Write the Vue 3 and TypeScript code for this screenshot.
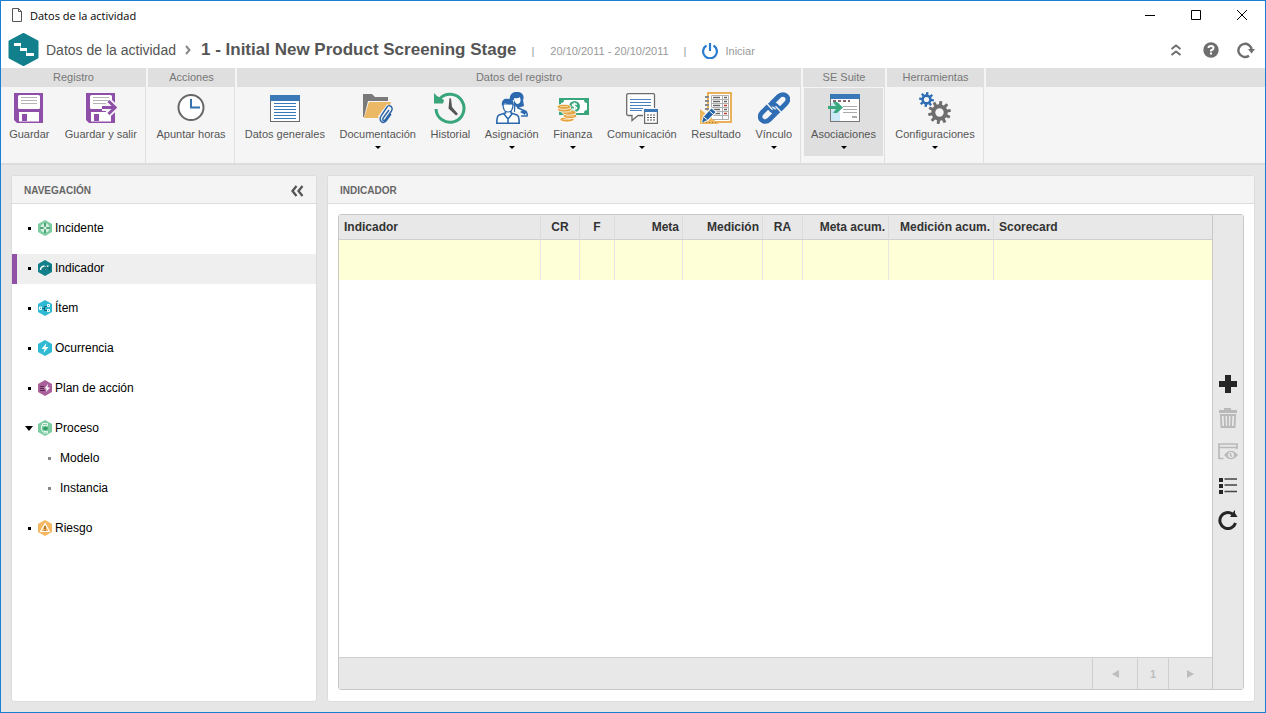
<script setup lang="ts">
interface RibbonItem {
  label: string
  icon: string
  menu?: boolean
  active?: boolean
}
interface RibbonGroup {
  id: string
  title: string
  items: RibbonItem[]
}
interface NavItem {
  label: string
  icon: string
  active?: boolean
  children?: string[]
}

function gear(cx: number, cy: number, outer: number, inner: number, hole: number, teeth: number): string {
  const step = (Math.PI * 2) / teeth
  const pts: string[] = []
  const at = (r: number, a: number) => `${(cx + r * Math.cos(a)).toFixed(2)} ${(cy + r * Math.sin(a)).toFixed(2)}`
  for (let i = 0; i < teeth; i++) {
    const a = i * step - Math.PI / 2 + 0.12
    pts.push(at(inner, a - step * 0.3), at(outer, a - step * 0.2), at(outer, a + step * 0.2), at(inner, a + step * 0.3))
  }
  return `M${pts.join('L')}Z M${cx - hole} ${cy}a${hole} ${hole} 0 1 0 ${hole * 2} 0a${hole} ${hole} 0 1 0 ${-hole * 2} 0Z`
}

const floppy =
  '<path fill="#8e4fa8" d="M1 1H30V31H4L1 28Z"/><rect x="5" y="3" width="22" height="14" rx="1.500" fill="#fff"/>' +
  '<path stroke="#b5b5b5" d="M8 5.500H24M8 8.500H24M8 11.500H24"/><rect x="6" y="20" width="20" height="9.500" fill="#fff"/><rect x="9" y="22" width="5" height="7" fill="#8e4fa8"/>'

const icons: Record<string, string> = {
  save: floppy,
  saveExit:
    floppy +
    '<path fill="none" stroke="#f5f5f5" stroke-width="7" d="M17 15.500H29M23 9L30 15.500L23 22"/>' +
    '<path fill="none" stroke="#8e4fa8" stroke-width="3" d="M17 15.500H30M23.500 9L30.200 15.500L23.500 22"/>',
  clock:
    '<circle cx="16" cy="15.500" r="12.500" fill="#fff" stroke="#666" stroke-width="2"/>' +
    '<path fill="none" stroke="#3572b0" stroke-width="2" d="M16 7V15.500H25"/>',
  form:
    '<rect x="1.500" y="3.500" width="29" height="26" fill="#fff" stroke="#6b6b6b"/><path fill="#3b78b8" d="M1 3H31V9H1Z"/>' +
    '<path stroke="#3b78b8" d="M5 11.500H27M5 14.500H27M5 17.500H27M5 20.500H27M5 23.500H27M5 26.500H27"/>',
  folder:
    '<path fill="#7a7a7a" d="M1 2H10L13 5H26V9H6L2 25H1Z"/><path fill="#ebb865" d="M7 10H29L24 26H2Z"/>' +
    '<path fill="none" stroke="#f5f5f5" stroke-width="4" d="M27 17L20.500 25.500L23 28L30 19L25.500 15L18.500 24.500L24 29"/>' +
    '<path fill="none" stroke="#2a63a6" stroke-width="1.400" d="M27 18L21.500 25.500C19.500 28.500 22 29.500 23.500 27.500L29.500 19C31.500 15.500 27.500 11.500 25 15L19 24C16.500 28.500 20.500 32.500 24 29L29 22"/>',
  history:
    '<path fill="none" stroke="#38a67a" stroke-width="3" d="M5.500 7A14 14 0 1 1 2 17"/><path fill="#38a67a" d="M0 1L3 4L10 8L9 11.500H0Z"/>' +
    '<path fill="#555" d="M15.500 6L17 6.500L18 15L24 22L22 23.500L14.500 16.500Z"/>',
  people:
    '<path fill="#fff" stroke="#2c69ae" stroke-width="1.500" d="M19 10C20 13 22 15 22 16L29 19Q32 21 31 24H18Z"/>' +
    '<path fill="#2c69ae" d="M14 9C13 3 16 0 20 0C26-1 29 4 27 8L28 14L22 16L18 12Z"/><path fill="#fff" d="M18 6Q22 7 24 5Q26 12 21 12Q18 10 18 6Z"/>' +
    '<path fill="#f5f5f5" d="M5 8H18V20H25V32H0V20H5Z"/><path fill="#fff" stroke="#2c69ae" stroke-width="1.600" d="M9.500 18.500V21L3 23Q.8 24 .8 31.200H23.200Q23.200 24 21 23L15 21V18.500M8 22L12 27L16 22M12 27V31"/>' +
    '<path fill="#fff" stroke="#2c69ae" stroke-width="1.200" d="M7 12Q7 20 12 20Q17 20 17 12Z"/><path fill="#2c69ae" d="M6 14C5 9 8 6 12 7C17 6 18 10 17.500 14L16 12Q12 13 9 11Z"/><path fill="#2c69ae" d="M27 18L24 20L29 23L31 19Z"/>',
  money:
    '<path fill="#38a67a" d="M2 6H32V23H2Z"/><path fill="#fff" d="M7 8H27Q27 11 30 11V18Q27 18 27 21H7Q7 18 4 18V11Q7 11 7 8Z"/>' +
    '<circle cx="17.500" cy="14.500" r="5.500" fill="#38a67a"/><path fill="none" stroke="#fff" stroke-width="1.300" d="M20 12.500Q17.500 11 15.500 12.500Q15 14 17.500 14.500Q20 15 19.500 16.500Q17.500 18 15 16.500M17.500 10.500V18.500"/>' +
    '<g fill="#e3a33f" stroke="#fff" stroke-width=".8"><ellipse cx="10" cy="27.500" rx="7" ry="2.600"/><ellipse cx="13" cy="24" rx="7" ry="2.600"/><ellipse cx="12" cy="20.500" rx="7" ry="2.600"/><ellipse cx="7.500" cy="17.500" rx="7" ry="2.600"/><ellipse cx="7" cy="14.800" rx="7" ry="2.600"/></g>' +
    '<path stroke="#f4cf94" d="M3 14.500H11M8 20H15M9 24H17M6 27.500H14"/>',
  chat:
    '<path fill="#fff" stroke="#6b6b6b" stroke-width="1.300" d="M2.500 1.700H27.500Q28.500 1.700 28.500 2.700V23.500H12L6 28.500V23.500H2.500Q.7 23.500 .7 22V3Q.7 1.700 2.500 1.700Z"/>' +
    '<path stroke="#4c83bf" d="M4 7.500H25M4 10.500H25M4 13.500H25M4 16.500H25M4 18.500H16"/><path fill="#f5f5f5" d="M17 16H32V32H17Z"/>' +
    '<rect x="18.600" y="17.600" width="12.800" height="13.800" fill="#fff" stroke="#6b6b6b" stroke-width="1.200"/><path fill="#3b78b8" d="M18 17H32V20H18Z"/>' +
    '<path stroke="#555" stroke-width="1.200" stroke-dasharray="2 1" d="M21 23H29M21 25.500H29M21 28H29"/>',
  result:
    '<path fill="#fff" stroke="#e9b15a" stroke-width="2" d="M8 1H31V30H8Z"/><path fill="#fff" stroke="#b0b0b0" d="M11.500 3.500H28.500V27.500H11.500Z"/>' +
    '<path stroke="#b0b0b0" d="M11 7.500H28M11 11.500H28M11 15.500H28M11 19.500H28M11 23.500H28M22.500 4V27"/>' +
    '<path stroke="#666" stroke-width="1.300" d="M13 5.500H20M13 9.500H20M13 13.500H20M13 17.500H20M13 21.500H20M24 5.500H27M24 9.500H27M24 17.500H27"/><path stroke="#c0392b" stroke-width="1.500" d="M24 13.500H27M24 21.500H27"/>' +
    '<path stroke="#888" stroke-width="4" stroke-dasharray="2 2" d="M7 4V18"/><path fill="#edb65d" d="M0 17V32H19Z"/><path stroke="#9a783f" stroke-dasharray="1 2" d="M3 30.500H16"/>' +
    '<path fill="#fff" d="M1 31L3 24L11 15L17 20L8 29Z"/><path fill="#2563a8" d="M2 30.500L3.500 25L11.500 16.500L15.500 20L7.500 28Z"/><path stroke="#fff" d="M4 25L7.500 28M9.500 19L13 22"/>',
  link:
    '<g fill="none" stroke="#2f6db4" stroke-width="4.600"><path d="M13 12L20.500 4.500C26-1 33.500 6 28 11.500L21.500 18C18.500 21 15 20 13 17.500L10.500 14.500"/>' +
    '<path d="M19 20L11.500 27.500C6 33-1.500 26 4 20.500L10.500 14C13.500 11 17 12 19 14.500L21.500 17.500"/></g>' +
    '<path stroke="#f5f5f5" stroke-width="1.300" d="M8.800 11.500L14.500 17.800M17.500 14.200L23.500 20.500"/>',
  assoc:
    '<rect x="2.500" y="3.500" width="29" height="26" fill="#fff" stroke="#777"/><path fill="#3b78b8" d="M2 2H32V7H2Z"/><path fill="#cfe8f8" d="M3 11H12V29H3Z"/>' +
    '<path stroke="#8a6570" stroke-width="2" stroke-dasharray="3 2" d="M5 9H22"/><path stroke="#aaa" d="M15 14.500H29M15 17.500H29M15 20.500H29"/><path stroke="#aaa" stroke-width="2" d="M24 25H29"/>' +
    '<path fill="#3aaa7e" d="M0 14H8L5 10H9L15 15.500L9 21H5L8 17H0Z"/>',
  gears:
    `<path fill="#2f6db4" fill-rule="evenodd" d="${gear(7.5, 7.5, 7.5, 5.2, 2.6, 8)}"/>` +
    `<path fill="#6e6e6e" fill-rule="evenodd" d="${gear(20.5, 20.5, 11.5, 8.2, 4.2, 10)}"/>`,
}

const hex = (fill: string) => `<path fill="${fill}" d="M7 0L14 4V12L7 16L0 12V4Z"/>`
const navIcons: Record<string, string> = {
  incident:
    hex('#7ccba1') +
    '<circle cx="7" cy="8" r="4.700" fill="#d5efe0"/><path stroke="#2f8f5d" stroke-width="1.600" d="M7 3V13M2 8H12"/><circle cx="7" cy="8" r="1.500" fill="#d5efe0"/>',
  gauge:
    hex('#12808a') +
    '<path fill="none" stroke="#fff" stroke-width="1.500" d="M2.500 10Q2.500 6.500 6.500 6M7 10Q7 6.500 10.500 6"/><path fill="none" stroke="#0c5c64" stroke-width="1.500" d="M6 10L9 6.500M11.500 6.500V10"/>',
  item:
    hex('#2fb9d2') +
    '<path fill="none" stroke="#fff" d="M1.500 7H3.500V9.500H1.500ZM9.500 4.500H11.500V6.500H9.500ZM9.500 9.500H11.500V11.500H9.500Z"/><path fill="none" stroke="#17616f" d="M4 8.500H7M9 6.500H6.500V10.500H9"/>',
  bolt: hex('#2fb9d2') + '<path fill="#fff" d="M8.500 3L3.500 9H6.500L5.500 13L10.500 7H7.500Z"/>',
  plan:
    hex('#a9609b') + '<path stroke="#57294f" d="M2 6.500H6M2 8.500H6M2 10.500H7"/><path fill="#fff" d="M10 4L6.500 8.500H8.500L8 12L12 7.500H9.500Z"/>',
  process:
    hex('#7ccba1') +
    '<path fill="none" stroke="#e8f7ee" d="M4.500 3.500H9.500V5.500H4.500ZM3.500 5V10L5.500 12.500M5.500 11.500H9.500V13H5.500"/><path fill="#2f9a63" d="M4.500 8.500L7.500 6.500L10.500 8.500L7.500 10.500Z"/>',
  risk:
    hex('#f5b860') +
    '<path fill="none" stroke="#fff" stroke-width="1.200" stroke-linejoin="round" d="M7 3.500L11.500 11.500H2.500Z"/><path stroke="#8c5a1c" stroke-width="1.300" d="M7 6V9M7 9.700V11"/>',
}

const groups: RibbonGroup[] = [
  { id: 'record', title: 'Registro', items: [{ label: 'Guardar', icon: 'save' }, { label: 'Guardar y salir', icon: 'saveExit' }] },
  { id: 'actions', title: 'Acciones', items: [{ label: 'Apuntar horas', icon: 'clock' }] },
  {
    id: 'data',
    title: 'Datos del registro',
    items: [
      { label: 'Datos generales', icon: 'form' },
      { label: 'Documentación', icon: 'folder', menu: true },
      { label: 'Historial', icon: 'history' },
      { label: 'Asignación', icon: 'people', menu: true },
      { label: 'Finanza', icon: 'money', menu: true },
      { label: 'Comunicación', icon: 'chat', menu: true },
      { label: 'Resultado', icon: 'result' },
      { label: 'Vínculo', icon: 'link', menu: true },
    ],
  },
  { id: 'suite', title: 'SE Suite', items: [{ label: 'Asociaciones', icon: 'assoc', menu: true, active: true }] },
  { id: 'utilities', title: 'Herramientas', items: [{ label: 'Configuraciones', icon: 'gears', menu: true }] },
]

const nav: NavItem[] = [
  { label: 'Incidente', icon: 'incident' },
  { label: 'Indicador', icon: 'gauge', active: true },
  { label: 'Ítem', icon: 'item' },
  { label: 'Ocurrencia', icon: 'bolt' },
  { label: 'Plan de acción', icon: 'plan' },
  { label: 'Proceso', icon: 'process', children: ['Modelo', 'Instancia'] },
  { label: 'Riesgo', icon: 'risk' },
]

const columns = [
  { key: 'name', label: 'Indicador', align: 'left' },
  { key: 'cr', label: 'CR', align: 'center' },
  { key: 'f', label: 'F', align: 'center' },
  { key: 'meta', label: 'Meta', align: 'right' },
  { key: 'med', label: 'Medición', align: 'right' },
  { key: 'ra', label: 'RA', align: 'center' },
  { key: 'meta-ac', label: 'Meta acum.', align: 'right' },
  { key: 'med-ac', label: 'Medición acum.', align: 'right' },
  { key: 'score', label: 'Scorecard', align: 'left' },
]
</script>

<template>
  <div class="window">
    <div class="titlebar">
      <svg class="doc" width="12" height="16" viewBox="0 0 12 16"><path fill="#fff" stroke="#555" d="M1.500 1.500H7.500L10.500 4.500V14.500H1.500ZM7.500 1.500V4.500H10.500" /></svg>
      <span class="caption">Datos de la actividad</span>
      <button type="button" aria-label="Minimizar"><svg width="12" height="12" viewBox="0 0 12 12"><path stroke="#000" d="M1 6.500H11" /></svg></button>
      <button type="button" aria-label="Maximizar"><svg width="12" height="12" viewBox="0 0 12 12"><path fill="none" stroke="#000" d="M1.500 1.500H10.500V10.500H1.500Z" /></svg></button>
      <button type="button" aria-label="Cerrar"><svg width="12" height="12" viewBox="0 0 12 12"><path stroke="#000" d="M1 1L11 11M11 1L1 11" /></svg></button>
    </div>

    <header class="header">
      <svg class="logo" width="31" height="33" viewBox="0 0 31 33">
        <path fill="#12808c" stroke="#12808c" stroke-width="2" stroke-linejoin="round" d="M15.500 1L29.500 8.500V24.500L15.500 32L1.500 24.500V8.500Z" />
        <path fill="none" stroke="#9fd0d4" d="M12.500 12V16.500M18.500 17V21.500" />
        <path stroke="#fff" stroke-width="3" d="M6 11.500H13M12 16.500H19M18 21.500H26" />
      </svg>
      <a class="crumb" href="#">Datos de la actividad</a>
      <svg class="sep" width="6" height="10" viewBox="0 0 6 10"><path fill="none" stroke="#888" stroke-width="2" d="M1 1L4.500 5L1 9" /></svg>
      <h1>1 - Initial New Product Screening Stage</h1>
      <span class="meta bar">|</span>
      <span class="meta">20/10/2011 - 20/10/2011</span>
      <span class="meta bar">|</span>
      <button type="button" class="start meta">
        <svg width="16" height="16" viewBox="0 0 16 16"><path fill="none" stroke="#2b7cd0" stroke-width="2.200" d="M4.500 2.500A6.900 6.900 0 1 0 11.500 2.500M8 0V8" /></svg>
        Iniciar
      </button>
      <div class="tools">
        <button type="button" aria-label="Contraer"><svg width="18" height="18" viewBox="0 0 18 18"><path fill="none" stroke="#6e6e6e" stroke-width="2" d="M4.500 8L9 4.500L13.500 8M4.500 14L9 10.500L13.500 14" /></svg></button>
        <button type="button" aria-label="Ayuda"><svg width="18" height="18" viewBox="0 0 18 18"><circle cx="9" cy="9" r="7.700" fill="#6e6e6e" /><path fill="none" stroke="#fff" stroke-width="2" d="M6.500 7Q6.500 5 9 5Q11.500 5 11.500 7Q11.500 8.500 9 9.500V10.500M9 11.500V13.500" /></svg></button>
        <button type="button" aria-label="Actualizar"><svg width="18" height="18" viewBox="0 0 18 18"><path fill="none" stroke="#6e6e6e" stroke-width="2.400" d="M12 14.700A6.600 6.600 0 1 1 14.600 9" /><path fill="#6e6e6e" d="M11 8H18L14.500 12.500Z" /></svg></button>
      </div>
    </header>

    <div class="ribbon">
      <section v-for="g in groups" :key="g.id" class="group" :class="g.id">
        <h2>{{ g.title }}</h2>
        <div class="actions">
          <button v-for="it in g.items" :key="it.label" type="button" :class="{ active: it.active }">
            <svg width="32" height="32" viewBox="0 0 32 32" v-html="icons[it.icon]"></svg>
            <span>{{ it.label }}</span>
            <svg v-if="it.menu" class="arrow" width="6" height="3" viewBox="0 0 6 3"><path d="M0 0H6L3 3Z" /></svg>
          </button>
        </div>
      </section>
      <div class="filler"></div>
    </div>

    <div class="content">
      <aside class="panel">
        <div class="panel-head">
          <h3>NAVEGACIÓN</h3>
          <button type="button" aria-label="Ocultar navegación"><svg width="14" height="12" viewBox="0 0 14 12"><path fill="none" stroke="#555" stroke-width="2.300" d="M6.500 1L2.500 6L6.500 11M12.500 1L8.500 6L12.500 11" /></svg></button>
        </div>
        <ul class="nav">
          <li v-for="n in nav" :key="n.label">
            <a href="#" :class="{ active: n.active }">
              <span class="marker"><svg v-if="n.children" width="8" height="5" viewBox="0 0 8 5"><path d="M0 0H8L4 5Z" /></svg><i v-else></i></span>
              <svg width="14" height="16" viewBox="0 0 14 16" v-html="navIcons[n.icon]"></svg>
              <span>{{ n.label }}</span>
            </a>
            <ul v-if="n.children">
              <li v-for="c in n.children" :key="c"><a href="#" class="sub"><i></i><span>{{ c }}</span></a></li>
            </ul>
          </li>
        </ul>
      </aside>

      <main class="panel">
        <div class="panel-head"><h3>INDICADOR</h3></div>
        <div class="frame">
          <div class="grid">
            <table>
              <colgroup><col v-for="c in columns" :key="c.key" :class="'c-' + c.key" /></colgroup>
              <thead><tr><th v-for="c in columns" :key="c.key" scope="col" :class="c.align">{{ c.label }}</th></tr></thead>
              <tbody><tr><td v-for="c in columns" :key="c.key"></td></tr></tbody>
            </table>
            <div class="pager">
              <button type="button" class="prev" aria-label="Anterior" disabled><svg width="7" height="8" viewBox="0 0 7 8"><path fill="#bdbdbd" d="M7 0V8L0 4Z" /></svg></button>
              <button type="button" class="page" disabled>1</button>
              <button type="button" class="next" aria-label="Siguiente" disabled><svg width="7" height="8" viewBox="0 0 7 8"><path fill="#bdbdbd" d="M0 0V8L7 4Z" /></svg></button>
            </div>
          </div>
          <div class="side">
            <button type="button" aria-label="Agregar"><svg width="20" height="20" viewBox="0 0 20 20"><path fill="#262626" d="M7 1H13V7H19V13H13V19H7V13H1V7H7Z" /></svg></button>
            <button type="button" aria-label="Eliminar" disabled><svg width="20" height="20" viewBox="0 0 20 20"><path fill="#b9b9b9" d="M1 2H6V0H13V2H19V5H1Z" /><path fill="none" stroke="#b9b9b9" stroke-width="1.800" d="M2.800 7H17.200L16.500 19H3.500ZM6.500 7L7 19M10 7V19M13.500 7L13 19" /></svg></button>
            <button type="button" aria-label="Visualizar" disabled>
              <svg width="20" height="20" viewBox="0 0 20 20"><path fill="none" stroke="#b9b9b9" stroke-width="1.700" d="M5.500 16.500H1V2H19V7M1 5.500H19" /><path fill="#b9b9b9" d="M6 13Q13 4.500 20 13Q13 21.500 6 13Z" /><circle cx="13" cy="13" r="3" fill="#e8e8e8" /><path fill="none" stroke="#b9b9b9" stroke-width="1.500" d="M12.500 11V13.500L14 14.500" /></svg>
            </button>
            <button type="button" aria-label="Lista"><svg width="20" height="20" viewBox="0 0 20 20"><path fill="#262626" d="M1 2H5V6H1ZM1 8H5V12H1ZM1 14H5V18H1Z" /><path stroke="#444" stroke-width="1.400" d="M6.500 3H19M6.500 9H19M6.500 15.500H19" /></svg></button>
            <button type="button" aria-label="Recargar"><svg width="20" height="20" viewBox="0 0 20 20"><path fill="none" stroke="#262626" stroke-width="3" d="M14.500 4A8 8 0 1 0 17.500 13" /><path fill="#262626" d="M17 0V3L19.500 7H12L16 1Z" /></svg></button>
          </div>
        </div>
      </main>
    </div>
  </div>
</template>

<style>
body {
  margin: 0;
}
</style>

<style scoped>
* {
  box-sizing: border-box;
}
.window {
  display: flex;
  flex-direction: column;
  min-height: 100vh;
  border: 1px solid #1a7fd4;
  background: #fff;
  font-family: "Liberation Sans", Arial, sans-serif;
  font-size: 12px;
  color: #000;
}
button {
  padding: 0;
  border: 0;
  background: none;
  font: inherit;
  color: inherit;
}
a {
  color: inherit;
  text-decoration: none;
}
h1,
h2,
h3,
ul {
  margin: 0;
  padding: 0;
  list-style: none;
}
svg {
  display: block;
  flex: none;
}
.titlebar {
  display: flex;
  align-items: center;
  height: 30px;
  padding: 0 0 2px 10px;
}
.caption {
  flex: 1;
  margin-left: 7px;
  font-family: "Open Sans", sans-serif;
  font-size: 11px;
}
.titlebar button {
  display: flex;
  align-items: center;
  justify-content: center;
  width: 46px;
  height: 28px;
}
.header {
  display: flex;
  align-items: center;
  height: 37px;
  padding: 0 10px 0 7px;
  white-space: nowrap;
  color: #555;
}
.crumb {
  margin-left: 7px;
  font-size: 14px;
}
.sep {
  margin: 0 10px 0 9px;
}
h1 {
  font-size: 17px;
  line-height: 20px;
}
.meta {
  padding-top: 2px;
  font-size: 11px;
  line-height: 16px;
  color: #999;
}
.bar {
  margin: 0 15px;
}
.bar + .meta {
  margin-left: 1px;
}
.start {
  display: flex;
  align-items: center;
  gap: 7px;
}
.tools {
  display: flex;
  gap: 17px;
  margin-left: auto;
}
.ribbon {
  display: flex;
  gap: 2px;
  background: #f5f5f5;
  border-bottom: 2px solid #dcdcdc;
}
.group {
  display: flex;
  flex-direction: column;
}
.record {
  width: 145px;
}
.group.actions {
  width: 87px;
}
.data {
  width: 564px;
}
.suite {
  width: 82px;
}
.utilities {
  width: 97px;
}
.group h2 {
  height: 19px;
  background: #dfdfdf;
  font-size: 11px;
  font-weight: 400;
  line-height: 19px;
  text-align: center;
  color: #777;
}
div.actions {
  display: flex;
  gap: 1px;
  height: 76px;
  padding: 1px 1px 7px;
  border-right: 1px solid #e0e0e0;
}
div.actions button {
  flex: 1 1 auto;
  display: flex;
  flex-direction: column;
  align-items: center;
  padding: 4px 6px 0;
  font-size: 11px;
  line-height: 16px;
  color: #555;
  white-space: nowrap;
}
div.actions button span {
  margin-top: 2px;
}
div.actions .active {
  background: #dfdfdf;
}
.arrow {
  margin-top: 4px;
}
.filler {
  flex: 1;
  height: 19px;
  background: #dfdfdf;
}
.content {
  flex: 1;
  display: grid;
  grid-template-columns: 306px minmax(0, 1fr);
  gap: 10px;
  padding: 10px;
  background: #e6e6e6;
}
.panel {
  display: flex;
  flex-direction: column;
  border: 1px solid #dcdcdc;
  border-radius: 3px;
  background: #fff;
}
.panel-head {
  display: flex;
  align-items: center;
  justify-content: space-between;
  height: 28px;
  padding: 2px 12px 0;
  border-bottom: 1px solid #dcdcdc;
  background: #f4f4f4;
}
h3 {
  font-size: 10px;
  line-height: 16px;
  color: #666;
}
.nav {
  display: flex;
  flex-direction: column;
  gap: 10px;
  padding: 10px 0;
}
.nav a {
  display: flex;
  align-items: center;
  height: 30px;
  padding: 0 0 2px 8px;
  border-left: 5px solid transparent;
}
.nav a.active {
  border-color: #9152a6;
  background: #efefef;
}
.nav a > svg {
  margin-right: 3px;
}
.marker {
  display: flex;
  justify-content: center;
  width: 8px;
  margin-right: 5px;
}
.marker i,
.sub i {
  width: 3px;
  height: 3px;
  background: #000;
}
.nav a.sub {
  padding-left: 31px;
}
.sub i {
  margin-right: 9px;
  background: #888;
}
.frame {
  flex: 1;
  display: flex;
  margin: 10px 10px 11px;
  border: 1px solid #c8c8c8;
  border-radius: 3px;
}
.grid {
  flex: 1;
  display: flex;
  flex-direction: column;
  min-width: 0;
}
table {
  width: 100%;
  table-layout: fixed;
  border-collapse: separate;
  border-spacing: 0;
}
th {
  height: 25px;
  padding: 0 3px 1px;
  border-right: 1px solid #dcdcdc;
  border-bottom: 1px solid #cfcfcf;
  background: #e8e8e8;
  font-size: 12px;
  line-height: 16px;
  color: #333;
  white-space: nowrap;
}
td {
  height: 40px;
  padding: 0;
  border-right: 1px solid #e6e6e6;
  background: #ffffd7;
}
th:last-child,
td:last-child {
  border-right: 0;
}
.left {
  padding-left: 5px;
  text-align: left;
}
.center {
  text-align: center;
}
.right {
  text-align: right;
}
.c-name {
  width: 202px;
}
.c-cr {
  width: 39px;
}
.c-f {
  width: 35px;
}
.c-meta {
  width: 68px;
}
.c-med {
  width: 80px;
}
.c-ra {
  width: 40px;
}
.c-meta-ac {
  width: 86px;
}
.c-med-ac {
  width: 105px;
}
.pager {
  display: flex;
  justify-content: flex-end;
  height: 32px;
  margin-top: auto;
  border-top: 1px solid #cfcfcf;
  background: #e8e8e8;
}
.pager button {
  display: flex;
  align-items: center;
  justify-content: center;
  border-left: 1px solid #cfcfcf;
}
.pager .prev {
  width: 45px;
}
.pager .next {
  width: 44px;
}
.pager .page {
  width: 31px;
  font-size: 11px;
  font-weight: 700;
  color: #bdbdbd;
}
.side {
  display: flex;
  flex-direction: column;
  align-items: center;
  justify-content: center;
  width: 31px;
  border-left: 1px solid #c8c8c8;
  background: #e8e8e8;
}
.side button {
  display: flex;
  align-items: center;
  justify-content: center;
  width: 30px;
  height: 34px;
}
</style>
